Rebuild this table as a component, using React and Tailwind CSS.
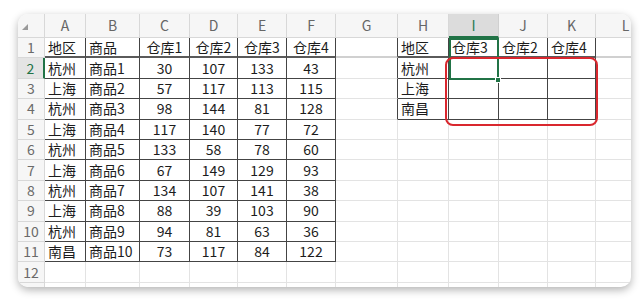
const cols = ["A", "B", "C", "D", "E", "F", "G", "H", "I", "J", "K", "L"];

const data = [
  ["地区", "商品", "仓库1", "仓库2", "仓库3", "仓库4", "", "地区", "仓库3", "仓库2", "仓库4"],
  ["杭州", "商品1", "30", "107", "133", "43", "", "杭州"],
  ["上海", "商品2", "57", "117", "113", "115", "", "上海"],
  ["杭州", "商品3", "98", "144", "81", "128", "", "南昌"],
  ["上海", "商品4", "117", "140", "77", "72"],
  ["杭州", "商品5", "133", "58", "78", "60"],
  ["上海", "商品6", "67", "149", "129", "93"],
  ["杭州", "商品7", "134", "107", "141", "38"],
  ["上海", "商品8", "88", "39", "103", "90"],
  ["杭州", "商品9", "94", "81", "63", "36"],
  ["南昌", "商品10", "73", "117", "84", "122"],
];

// table regions get dark borders
const inTable = (r, c) =>
  (r >= 1 && r <= 11 && c >= 1 && c <= 6) || (r >= 1 && r <= 4 && c >= 8 && c <= 11);

function Cell({ r, c }) {
  const darkR = inTable(r, c) || inTable(r, c + 1);
  const darkB = inTable(r, c) || inTable(r + 1, c);
  const text = data[r - 1]?.[c - 1] ?? "";
  const centered = c >= 3 && c <= 6;
  return (
    <div
      className={`flex items-center overflow-hidden whitespace-nowrap text-[14px] text-[#1c1c1c] border-r ${
        r === 1 ? "border-b-2" : "border-b"
      } ${darkR ? "border-r-[#444]" : "border-r-[#e3e3e3]"} ${
        darkB ? (r === 1 ? "border-b-[#5a5a5a]" : "border-b-[#444]") : r === 1 ? "border-b-[#d0d0d0]" : "border-b-[#e3e3e3]"
      } ${centered ? "justify-center" : "pl-[3px]"}`}
    >
      {text}
    </div>
  );
}

export default function App() {
  const rows = Array.from({ length: 13 }, (_, i) => i + 1);
  return (
    <div className="w-[640px] h-[302px] bg-white pt-[14px] pl-[18px] font-['Noto_Sans_CJK_SC','Noto_Sans',sans-serif]">
      <div className="relative w-[613px] h-[273px] rounded-[10px] overflow-hidden bg-white shadow-[0_3px_9px_rgba(0,0,0,0.3)]">
        <div className="grid grid-cols-[27px_41px_54px_50px_48px_49px_49px_62px_51px_50px_49px_48px_60px] grid-rows-[24px_repeat(13,20.4px)]">
          {/* corner */}
          <div className="relative bg-[#f6f6f6] border-r border-b border-[#d8d8d8]">
            <svg className="absolute left-[4px] top-[10px]" width="6" height="6" viewBox="0 0 6 6">
              <polygon points="6,0 6,6 0,6" fill="#9a9a9a" />
            </svg>
          </div>
          {cols.map((l) => (
            <div
              key={l}
              className={`flex items-center justify-center text-[14px] border-r ${
                l === "I"
                  ? "bg-[#dcdcdc] text-[#2a7a52] border-b-2 border-b-[#217346] border-r-[#d0d0d0]"
                  : "bg-[#f6f6f6] text-[#666] border-b border-[#d8d8d8]"
              }`}
            >
              {l}
            </div>
          ))}
          {rows.map((r) => [
            <div
              key={`h${r}`}
              className={`flex items-center justify-center text-[14px] border-b ${
                r === 2
                  ? "bg-[#e4e4e4] text-[#217346] border-r-2 border-r-[#217346] border-b-[#d8d8d8]"
                  : "bg-[#f6f6f6] text-[#6a6a6a] border-r border-[#d8d8d8]"
              }`}
            >
              {r}
            </div>,
            ...cols.map((_, i) => <Cell key={`${r}-${i}`} r={r} c={i + 1} />),
          ])}
        </div>

        {/* active selection I1:I2 */}
        <div className="absolute left-[431px] top-[24px] w-[50px] h-[42px] border-2 border-[#217346]" />
        <div className="absolute left-[477px] top-[63px] w-[6px] h-[6px] bg-[#217346] border border-white" />

        {/* red highlight */}
        <div className="absolute left-[427px] top-[43px] w-[153px] h-[69px] border-2 border-[#d9272e] rounded-[8px]" />
      </div>
    </div>
  );
}
